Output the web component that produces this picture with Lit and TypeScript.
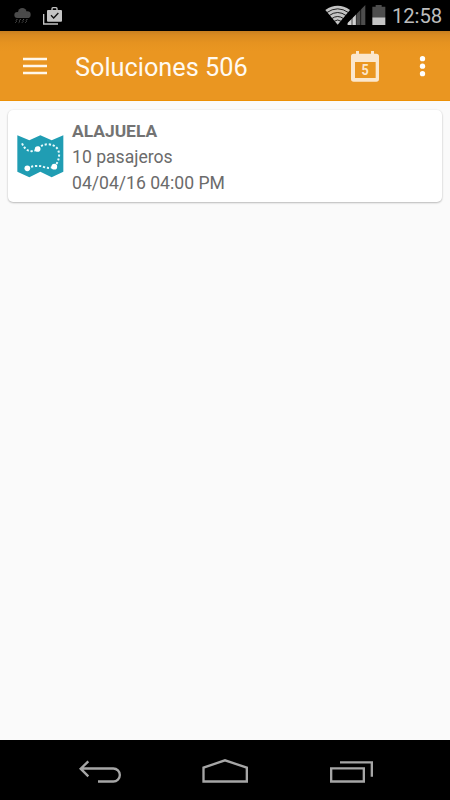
import { LitElement, html, css } from "lit";
import { customElement, property } from "lit/decorators.js";

@customElement("status-bar")
class StatusBar extends LitElement {
  static styles = css`
    :host { display: flex; height: 31px; background: #000; justify-content: space-between; }
    .clock { color: #bdbdbd; font: 20.3px/30px Roboto, sans-serif; padding: 1px 8px 0 0; box-sizing: border-box; height: 31px; letter-spacing: -0.1px; }
    .right { display: flex; }
    svg { display: block; }
  `;
  render() {
    return html`
      <svg width="80" height="31" viewBox="0 0 240 93">
        <g fill="#4a4a4a">
          <circle cx="67" cy="37" r="13" /><circle cx="52" cy="45" r="9" /><circle cx="82" cy="44" r="10" />
          <rect x="52" y="38" width="30" height="16" />
        </g>
        <path d="M52 57l-4 5M62 57l-4 5M72 57l-4 5M82 57l-4 5M50 64l-4 4M60 64l-4 4M70 64l-4 4M80 64l-4 4" stroke="#5a5a5a" stroke-width="3" />
        <path d="M131 42V72H174" fill="none" stroke="#c4c4c4" stroke-width="4" />
        <path d="M156 31V26Q156 23 159 23H168Q171 23 171 26V31" fill="none" stroke="#c4c4c4" stroke-width="4" />
        <rect x="141" y="30" width="45" height="35" rx="3" fill="#c4c4c4" />
        <path d="M153 46l8 8 14-15" fill="none" stroke="#111" stroke-width="4" />
      </svg>
      <div class="right">
        <svg width="82" height="31" viewBox="-1 0 246 93">
          <path d="M45 30Q82 5 119 30L82 74Z" fill="#c4c4c4" />
          <g fill="none" stroke="#000" stroke-width="2.500">
            <path d="M49 38Q82 15 115 38" /><path d="M56 47Q82 28 108 47" /><path d="M64 56Q82 43 100 56" /><path d="M71 64Q82 56 93 64" />
          </g>
          <path d="M112 75V69L165 15V75Z" fill="#4d4d4d" />
          <path d="M112 75V69L138 43V75Z" fill="#d0d0d0" />
          <path d="M125 20V76M138 20V76M151 15V76" stroke="#000" stroke-width="2" />
          <path d="M186 20H196V15H214V20H225V52H186Z" fill="#4d4d4d" />
          <path d="M186 52H225V75H186Z" fill="#c4c4c4" />
        </svg>
        <span class="clock">12:58</span>
      </div>
    `;
  }
}

@customElement("app-bar")
class AppBar extends LitElement {
  @property() heading = "";
  static styles = css`
    :host {
      display: flex; align-items: center; height: 70px; box-sizing: border-box;
      background: linear-gradient(#c87f20, #d98a20 4px, #e69320 12px, #ea9621 20px);
      border-bottom: 1px solid #ec9006; padding-left: 23px;
    }
    svg { display: block; flex: none; }
    .title { flex: 1; margin-left: 28px; padding-top: 4px; color: #fffaf2; font: 25.3px/30px Roboto, sans-serif; white-space: nowrap; }
    .day { font: 700 45px Roboto, sans-serif; }
  `;
  render() {
    return html`
      <svg width="24" height="18" viewBox="0 0 24 18"><path d="M0 2H24M0 9H24M0 16H24" stroke="#fff7ea" stroke-width="2.6" /></svg>
      <span class="title">${this.heading}</span>
      <svg width="120" height="69" viewBox="0 -27 360 207">
        <g fill="#fbe7cd">
          <path fill-rule="evenodd" d="M71 41H78V33H87V41H123V33H132V41H139Q147 41 147 49V117Q147 125 139 125H71Q63 125 63 117V49Q63 41 71 41ZM75 66V114H137V66Z" />
          <text class="day" transform="translate(105 106) scale(.84 1)" text-anchor="middle">5</text>
        </g>
        <g fill="#fff"><circle cx="277.500" cy="56" r="8" /><circle cx="277.500" cy="78.500" r="8" /><circle cx="277.500" cy="101" r="8" /></g>
      </svg>
    `;
  }
}

@customElement("trip-card")
class TripCard extends LitElement {
  @property() place = "";
  @property() passengers = "";
  @property() date = "";
  static styles = css`
    :host {
      display: flex; align-items: center; height: 92px; box-sizing: border-box;
      background: #fff; border-radius: 5px; padding-left: 9px;
      box-shadow: 0 1px 2px rgba(0, 0, 0, 0.24), 0 0 2px rgba(0, 0, 0, 0.08);
    }
    svg { display: block; flex: none; }
    .lines { margin-left: 8px; padding-top: 2px; color: #6b6b6b; font: 17.6px/26px Roboto, sans-serif; white-space: nowrap; }
    .place { font-weight: 700; color: #737373; font-size: 17.4px; }
  `;
  render() {
    return html`
      <svg width="47" height="43" viewBox="51 103 141 129">
        <path d="M52 104L88 119L121 104L155 119L190 104V213L155 230L121 213L88 230L52 213Z" fill="#209db3" />
        <g fill="none" stroke="#e9fafc" stroke-width="6" stroke-dasharray="6.500 5.500">
          <path d="M66 128C76 150 92 158 112 146Q125 130 146 131C182 134 184 168 167 194" />
          <path d="M82 203C96 196 113 194 127 197Q146 206 162 198" />
        </g>
        <g fill="#fff"><circle cx="113" cy="145" r="8.500" /><circle cx="82" cy="203" r="8.500" /><circle cx="163" cy="198" r="8.500" /></g>
      </svg>
      <div class="lines">
        <div class="place">${this.place}</div>
        <div>${this.passengers}</div>
        <div>${this.date}</div>
      </div>
    `;
  }
}

@customElement("nav-bar")
class NavBar extends LitElement {
  static styles = css`
    :host { display: flex; justify-content: space-between; height: 60px; background: #000; padding: 0 76px; }
    svg { display: block; fill: none; stroke: #a6a6a6; stroke-width: 7; }
  `;
  render() {
    return html`
      <svg width="48" height="60" viewBox="48 15 144 180"><path d="M62 100.500H160A19.500 19.500 0 0 1 160 139.500H114M85 79L62 101L85 124" /></svg>
      <svg width="50" height="60" viewBox="420 15 150 180"><path d="M430.500 139.500V98L495 76L560.500 98V139.500Z" /></svg>
      <svg width="48" height="60" viewBox="798 15 144 180"><path d="M813.500 100H911.500V139.500H813.500ZM840 82H935.500V125" /></svg>
    `;
  }
}

@customElement("app-root")
class AppRoot extends LitElement {
  static styles = css`
    :host { display: flex; flex-direction: column; height: 800px; background: #fafafa; }
    .content { flex: 1; padding: 9px 8px; }
  `;
  render() {
    return html`
      <status-bar></status-bar>
      <app-bar heading="Soluciones 506"></app-bar>
      <main class="content">
        <trip-card place="ALAJUELA" passengers="10 pasajeros" date="04/04/16 04:00 PM"></trip-card>
      </main>
      <nav-bar></nav-bar>
    `;
  }
}
